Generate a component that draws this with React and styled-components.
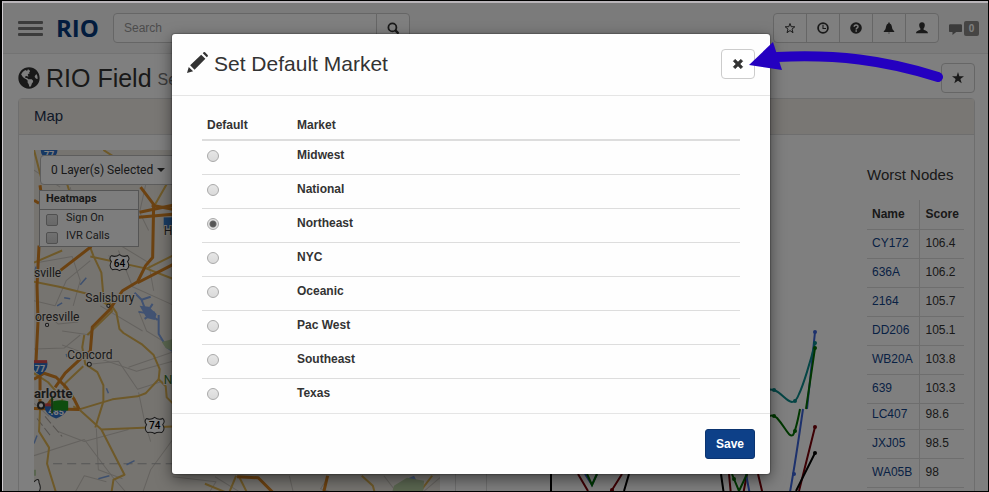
import React, { useState } from 'react';
import styled, { createGlobalStyle } from 'styled-components';
import { FaGlobeAmericas } from 'react-icons/fa';

const GlobalStyle = createGlobalStyle`
  * { box-sizing: border-box; }
  body {
    margin: 0;
    background: #000;
    color: #333;
    font: 12px/17px "Liberation Sans", Arial, sans-serif;
  }
  button, input { font: inherit; color: inherit; }
`;

const Frame = styled.div`
  height: 100vh;
  border: 1px solid #000;
  border-left-width: 2px;
`;

const Screen = styled.div`
  position: relative;
  height: 100%;
  overflow: hidden;
  background: #fff;
  border-top: 2px solid #b9b5b9;
  border-left: 1px solid #d2ced2;
`;

const TopBar = styled.header`
  display: flex;
  align-items: center;
  height: 51px;
  padding: 0 9px 0 15px;
  background: #f7f7f7;
  border-bottom: 1px solid #e7e7e7;
`;

const MenuButton = styled.button`
  display: grid;
  gap: 3px;
  width: 25px;
  padding: 0;
  border: 0;
  background: none;
  span { height: 3px; border-radius: 1px; background: #777; }
`;

const Logo = styled.a`
  margin-left: 13px;
  width: 57px;
  color: #04397c;
  font: bold 24px/30px "Open Sans", "Noto Sans", sans-serif;
  text-decoration: none;
`;

const SearchForm = styled.form`
  display: flex;
  flex: 0 1 297px;
  height: 30px;
`;

const SearchInput = styled.input`
  flex: 1;
  min-width: 0;
  padding: 0 10px;
  border: 1px solid #ccc;
  border-radius: 4px 0 0 4px;
  background: #fff;
  &::placeholder { color: #999; opacity: 1; }
`;

const Button = styled.button`
  display: inline-flex;
  align-items: center;
  justify-content: center;
  width: 34px;
  height: 30px;
  padding: 0;
  border: 1px solid #ccc;
  border-radius: 4px;
  background: #fff;
  color: #333;
`;

const SearchButton = styled(Button)`
  margin-left: -1px;
  border-radius: 0 4px 4px 0;
`;

const ButtonGroup = styled.div`
  display: flex;
  margin-left: auto;
  ${Button} {
    border-radius: 0;
    &:not(:first-child) { margin-left: -1px; }
    &:first-child { border-radius: 4px 0 0 4px; }
    &:last-child { border-radius: 0 4px 4px 0; }
  }
`;

const Messages = styled.a`
  display: flex;
  align-items: center;
  gap: 2px;
  margin-left: 10px;
  color: #777;
  text-decoration: none;
`;

const Badge = styled.span`
  width: 15px;
  height: 15px;
  border-radius: 2px;
  background: #8d8b88;
  color: #fff;
  font-size: 10px;
  font-weight: bold;
  line-height: 15px;
  text-align: center;
`;

const PageHead = styled.div`
  display: flex;
  align-items: flex-start;
  justify-content: space-between;
  padding: 9px 13px 5px 15px;
`;

const PageTitle = styled.h1`
  display: flex;
  align-items: center;
  margin: 0;
  font-size: 25px;
  font-weight: normal;
  line-height: 27px;
  svg { margin-right: 6px; }
  small { margin-left: 6px; padding-top: 3px; color: #777; font-size: 16px; }
`;

const Panels = styled.div`
  display: grid;
  grid-template-columns: 438fr 489fr;
  gap: 30px;
  padding: 0 13px 0 15px;
`;

const Panel = styled.section`
  min-width: 0;
  border: 1px solid #ddd;
  border-radius: 4px 4px 0 0;
`;

const PanelTitle = styled.h2`
  height: 36px;
  margin: 0;
  padding: 0 15px;
  border-bottom: 1px solid #ddd;
  background: #f3eee9;
  color: #1d3350;
  font-size: 15px;
  font-weight: normal;
  line-height: 34px;
`;

const PanelBody = styled.div`
  display: flex;
  padding: ${(p) => (p.$chart ? '15px 10px 0 15px' : '15px')};
  height: 400px;
`;

const MapArea = styled.div`
  position: relative;
  flex: 1;
  min-width: 0;
  overflow: hidden;
  background: #ede8e0;
  font-family: Roboto, sans-serif;
  > svg { display: block; width: 100%; height: 100%; }
`;

const MapControls = styled.div`
  position: absolute;
  top: 5px;
  left: 5px;
`;

const LayerButton = styled.button`
  display: flex;
  align-items: center;
  gap: 4px;
  height: 30px;
  margin: 0 0 5px 1px;
  padding: 0 10px;
  border: 1px solid #bbb;
  border-radius: 4px;
  background: #fff;
`;

const Heatmaps = styled.fieldset`
  width: 100px;
  height: 57px;
  margin: 0;
  padding: 0;
  border: 1px solid #aaa;
  background: #fbfbfb;
  font-size: 11px;
`;

const HeatTitle = styled.div`
  height: 19px;
  padding-left: 6px;
  border-bottom: 1px solid #aaa;
  font-weight: bold;
  line-height: 16px;
`;

const CheckRow = styled.label`
  display: flex;
  gap: 8px;
  height: 18px;
  padding-left: 6px;
  line-height: 16px;
`;

const Tick = styled.input`
  appearance: none;
  width: 12px;
  height: 12px;
  margin: 4px 0 0;
  border: 1px solid #a0a0a0;
  border-radius: 2px;
  background: linear-gradient(#e2e2e2, #cfcfcf);
`;

const ChartArea = styled.div`
  flex: 1;
  min-width: 0;
  svg { display: block; }
`;

const NodesBlock = styled.div`
  width: 97px;
  padding-top: 16px;
`;

const NodesTitle = styled.h3`
  margin: 0 0 16px;
  font-size: 15px;
  font-weight: normal;
  line-height: 18px;
  white-space: nowrap;
`;

const NodesTable = styled.table`
  width: 100%;
  border-collapse: collapse;
  table-layout: fixed;
  th, td {
    height: 29px;
    padding: 0 0 0 6px;
    border-bottom: 1px solid #ddd;
    text-align: left;
  }
  th:first-child, td:first-child { width: 52px; padding-left: 5px; border-right: 1px solid #ddd; }
  a { color: #114389; text-decoration: none; }
`;

const NodeRow = styled.tr`
  && td { ${(p) => p.$short && 'height: 26px; padding-bottom: 4px;'} }
`;

const Backdrop = styled.div`
  position: absolute;
  inset: 0;
  display: flex;
  justify-content: center;
  align-items: flex-start;
  padding: 31px 49px 0 0;
  background: rgba(0, 0, 0, 0.5);
`;

const Dialog = styled.div`
  width: 598px;
  max-width: 90%;
  border-radius: 3px;
  background: #fefefe;
  box-shadow: 0 5px 15px rgba(0, 0, 0, 0.5), 0 0 1px 1px rgba(0, 0, 0, 0.2);
`;

const DialogHead = styled.div`
  display: flex;
  align-items: flex-start;
  justify-content: space-between;
  padding: 15px;
  height: 62px;
  border-bottom: 1px solid #e5e5e5;
`;

const DialogTitle = styled.h2`
  display: flex;
  align-items: center;
  gap: 6px;
  margin: 0;
  font-size: 21px;
  font-weight: normal;
  line-height: 30px;
  svg { margin-bottom: 3px; }
`;

const DialogBody = styled.div`
  padding: 15px 30px 1px;
`;

const MarketTable = styled.table`
  width: 100%;
  border-collapse: separate;
  border-spacing: 0;
  th { padding: 6px 5px 5px; border-bottom: 2px solid #ddd; text-align: left; }
  th:first-child { width: 90px; }
  td { height: 33px; padding: 6px 5px 10px; font-weight: bold; vertical-align: top; }
  tr + tr td { height: 34px; border-top: 1px solid #ddd; }
`;

const Radio = styled.input`
  appearance: none;
  display: block;
  width: 12px;
  height: 12px;
  margin: 3px 0 0;
  border: 1px solid #a9a9a9;
  border-radius: 50%;
  background: linear-gradient(#e6e6e6, #dadada);
  &:checked { background: radial-gradient(circle, #555 0 2px, #666 3px, #e2e2e2 4px); }
`;

const DialogFoot = styled.div`
  display: flex;
  justify-content: flex-end;
  padding: 15px;
  border-top: 1px solid #e5e5e5;
`;

const SaveButton = styled.button`
  width: 50px;
  height: 30px;
  padding: 0;
  border: 1px solid #0b3470;
  border-radius: 3px;
  background: #0d4088;
  color: #fff;
  font-weight: bold;
`;

const Pointer = styled.svg`
  position: absolute;
  top: 39px;
  right: 45px;
  pointer-events: none;
`;

const glyphs = {
  search: <><circle cx="5.4" cy="5.4" r="4" fill="none" stroke="currentColor" strokeWidth="1.8" /><path d="m8.4 8.4 3.2 3.2" stroke="currentColor" strokeWidth="2.4" /></>,
  starOutline: <path d="M6 1.5 7.2 4.7l3.6.1-2.8 2.3 1 3.6L6 8.6l-3 2.1 1-3.6-2.8-2.3 3.6-.1Z" fill="none" stroke="currentColor" />,
  star: <path d="M6 0 7.4 4.2H12L8.4 6.9 9.7 11.3 6 8.7 2.3 11.3 3.6 6.9 0 4.2H4.6Z" fill="currentColor" />,
  clock: <><circle cx="6" cy="6" r="4.9" fill="none" stroke="currentColor" strokeWidth="1.8" /><path d="M6 2.8v3.7h3" fill="none" stroke="currentColor" strokeWidth="1.1" /></>,
  question: <><circle cx="6" cy="6" r="5.8" fill="currentColor" /><path d="M4.2 4.8C4.2 2.5 8 2.5 8 4.7 8 6 6.2 5.9 6.2 7.4M6.2 8.3v1.5" fill="none" stroke="#fff" strokeWidth="1.5" /></>,
  bell: <path d="M5.3.7Q6 0 6.7.7V1.4C9.4 2.2 8.6 6 10 7.8L11.3 9.4V10H.7V9.4L2 7.8C3.4 6 2.6 2.2 5.3 1.4ZM4.8 10.7H7.2Q6 12.3 4.8 10.7" fill="currentColor" />,
  user: <path d="M6 .2c2.1 0 3 1.3 2.8 3.2C8.7 5 8 5.8 7.6 6.4V7.7C9.2 8.6 11.8 8.8 12 11.2H0C.2 8.8 2.8 8.6 4.4 7.7V6.4C4 5.8 3.3 5 3.2 3.4 3 1.5 3.9.2 6 .2Z" fill="currentColor" />,
  comment: <path d="M1.2 2h9.6Q12 2 12 3.1V8.2Q12 9.3 10.8 9.3H6.7L3.2 12V9.3H1.2Q0 9.3 0 8.2V3.1Q0 2 1.2 2Z" fill="currentColor" />,
  close: <path d="M3.2 1.2 6 4 8.8 1.2 10.8 3.2 8 6l2.8 2.8-2 2L6 8l-2.8 2.8-2-2L4 6 1.2 3.2Z" fill="currentColor" stroke="currentColor" strokeWidth=".5" strokeLinejoin="round" />,
  pencil: <path d="M0 12 1 8.5 3.5 11ZM1.8 7.6 8.1 1.5 10.5 3.9 4.3 10.1ZM9 .7 9.5.2Q9.9-.1 10.3.2L11.8 1.7Q12.1 2.1 11.8 2.5L11.3 3Z" fill="currentColor" />,
};

const Icon = ({ name, size = 12 }) => (
  <svg width={size} height={size} viewBox="0 0 12 12" aria-hidden="true">{glyphs[name]}</svg>
);

const nodes = [
  ['CY172', '106.4'], ['636A', '106.2'], ['2164', '105.7'], ['DD206', '105.1'], ['WB20A', '103.8'],
  ['639', '103.3'], ['LC407', '98.6'], ['JXJ05', '98.5'], ['WA05B', '98'],
];

const markets = ['Midwest', 'National', 'Northeast', 'NYC', 'Oceanic', 'Pac West', 'Southeast', 'Texas'];

const actions = [
  ['starOutline', 'Favorites'], ['clock', 'History'], ['question', 'Help'], ['bell', 'Alerts'], ['user', 'Account'],
];

const minorRoads = [
  'M34 170 60 187M70 187 78 220M145 185 139 212 148 230M34 300 55 305 66 280 90 260',
  'M38 262 72 256 80 280 73 305M100 305 142 330M115 225 120 245 148 262 153 290M62 330 90 334',
  'M34 348 64 347 80 334M62 344 92 355 136 370 172 360M138 310 146 330 172 346M128 366 172 351',
  'M89 363 118 360 137 388 162 380M58 430 84 440 128 428M34 454 84 438 112 475 126 491',
  'M96 427 98 468 122 477M74 492 84 474 106 480M138 391 144 420 150 440M172 438 150 468 142 491',
  'M172 475 215 480 208 491M214 475 240 491M288 474 292 491M327 475 319 487 332 491M382 474 395 491M440 474 420 491',
  'M118 250 132 286 172 304M108 255 130 267M48 315 58 323 78 321M34 402 49 415',
];
const yellowRoads = [
  'M34 281 59 286 91 294 109 305M34 150 41 177M67 184 72 200M90 247 93 255 101 272 103 295 112 310M90 256 146 268 172 278M34 262 62 250',
  'M103 150 114 157 120 170M171 155V175L154 205M146 268 172 255',
  'M108 300 116 312 119 328 123 332 141 343 153 354 159 368 158 378',
  'M84 334 82 346 85 363 97 371 103 384 103 400 95 426M83 365 65 382 61 405M112 310 87 334',
  'M158 378 145 392 137 395 112 398 79 408M158 378 165 385 166 396 174 404M34 372 48 381 56 390M73 405 79 408',
  'M79 408 101 428 124 473 113 478 111 491M101 428 172 425',
  'M40 408 39 430 49 446 47 462 51 475 56 491',
  'M204 482 226 491M235 474 228 491M360 474 371 484 373 491M430 474 417 491M238 475 246 491',
];
const majorRoads = [
  'M40 185 42 200M39 245 37 285 38 320 36 360M34 200 39 203M140 187 153 204 152 257 145 265 137 281 122 290 109 309 92 326 90 350 80 358 65 372 55 386',
  'M34 378 44 372 56 376 66 386 74 398 79 408M40 375 40 405M34 407 79 408M56 392 45 407M60 270 91 246M139 212 172 205M138 217 172 214M137 282 172 264',
  'M236 475 257 476 272 491M326 474 322 491M151 205 172 209',
];

const Shield = ({ x, y, label }) => (
  <g>
    <path d={`M${x - 8} ${y - 7}q4 2 8-1q4 3 8 1q3 3 0 6q3 5-1 8q-4-1-7 1q-3-2-7-1q-4-3-1-8q-3-3 0-6`} fill="#fff" stroke="#333" />
    <text x={x} y={y + 4} fontSize="10" fontWeight="500" textAnchor="middle">{label}</text>
  </g>
);

const Interstate = ({ x, y, label, rx = 7 }) => (
  <g>
    <path d={`M${x - rx} ${y - 6}h${rx * 2}q2 9-${rx} 14q-${rx + 2}-5-${rx}-14`} fill="#2c6fc6" />
    <path d={`M${x - rx} ${y - 7}h${rx * 2}v3h-${rx * 2}Z`} fill="#d54a4d" />
    <text x={x} y={y + 5} fontSize="9" fontWeight="bold" fill="#fff" textAnchor="middle">{label}</text>
  </g>
);

function RoadMap() {
  return (
    <svg viewBox="34 150 406 368" preserveAspectRatio="xMinYMin slice" role="img" aria-label="Map">
      <g fill="none" strokeLinejoin="round">
        {minorRoads.map((d) => <path key={d} d={d} stroke="#c9c5be" strokeWidth="1" />)}
        <path d="M53 462H172" stroke="#aaa" strokeDasharray="9 5" />
        <path d="M37 417 51 435M45 415 62 435" stroke="#aaa59f" strokeDasharray="9 3" />
        {yellowRoads.map((d) => <path key={d} d={d} stroke="#dcb252" strokeWidth="2" />)}
        {majorRoads.map((d) => <path key={d} d={d} stroke="#d88423" strokeWidth="3" />)}
        <path d="M36 266 34 275M80 284 86 277M106 387 108 392M67 356 66 353M57 305 62 302M126 463 134 459M34 442 37 434M98 477 109 474M70 298 64 297" stroke="#7da1dc" strokeWidth="1.5" />
        <path d="M134 292 141 299 146 312 138 311M141 299 150 296M146 312 152 303M146 312 157 319M144 318 154 311M158 314V333L166 346 172 350" stroke="#82a5e4" strokeWidth="2" />
      </g>
      <path d="M139 305 148 306 156 313 154 319 146 317ZM405 477 412 474 416 482 408 480Z" fill="#82a5e4" />
      <path d="M161 341 172 338V350L165 347ZM392 484 405 476 422 479 421 491H390ZM34 468 36 468V474H34Z" fill="#b5cda0" />
      <path d="M163 217h9v11h-9Z" fill="#347ac8" />
      <Interstate x={49} y={153} label="77" rx={8} />
      <Interstate x={40} y={366} label="77" />
      <Interstate x={56} y={409} label="485" rx={11} />
      <Shield x={119} y={262} label="64" />
      <Shield x={154} y={424} label="74" />
      <path d="M34 480q5-5 5 1q3 6-1 10h-4" fill="#fff" stroke="#333" />
      <g fill="#333" fontSize="12" stroke="#f4efe7" strokeWidth="2" paintOrder="stroke">
        <text x="34" y="276">sville</text>
        <text x="85" y="301">Salisbury</text>
        <text x="35" y="320">oresville</text>
        <text x="67" y="358">Concord</text>
        <text x="34" y="397" fontSize="13" fontWeight="bold">arlotte</text>
        <text x="163" y="235">High Point</text>
        <text x="163" y="383" fill="#37792c">National</text>
      </g>
      <g fill="#fff" stroke="#333">
        <circle cx="108" cy="305" r="1.6" />
        <circle cx="47" cy="324" r="1.6" />
        <circle cx="89" cy="363" r="2" />
        <circle cx="41" cy="404" r="3" strokeWidth="2" />
      </g>
      <path d="M52 396v16" stroke="#2f6b2a" strokeWidth="2" />
      <path d="M53 400q8-2 15 0v9H53Z" fill="#1c9a1c" />
    </svg>
  );
}

const series = [
  { color: '#7a0008', d: 'M578 474 588 491M622 474 612 490 608 495M729 474 731 495M747 474 743 495M758 474 763 495M799 491 815 427', dots: [[612, 490], [815, 427]] },
  { color: '#3a62d8', d: 'M585 474 592 485 597 474M746 474 750 495M790 492C794 470 800 430 803 409M807 409 815 332', dots: [[794, 474], [815, 332]] },
  { color: '#000', d: 'M551 300V495M629 474 624 491M721 474 724 495M796 491 815 453', dots: [[651, 472], [815, 453]] },
  { color: '#0a8a8a', d: 'M766 389 774 390C782 393 786 401 792 402Q796 402 799 394C803 386 811 360 815 343', dots: [[774, 390], [795, 401], [815, 343]] },
  { color: '#006e00', d: 'M587 474 592 485 597 474M732 474 734 479 739 491 747 474M766 418Q772 413 777 418C786 428 789 438 793 435Q796 430 800 409M806 409 815 348', dots: [[734, 479], [774, 416], [795, 431], [815, 348]] },
];

function TrendChart() {
  return (
    <ChartArea>
      <svg width="350" height="350" viewBox="502 150 350 350" role="img" aria-label="Score trend">
        {series.map((s) => (
          <g key={s.color}>
            <path d={s.d} fill="none" stroke={s.color} strokeWidth="2" />
            {s.dots.map(([x, y]) => <circle key={`${x}-${y}`} cx={x} cy={y} r="2" fill={s.color} />)}
          </g>
        ))}
      </svg>
    </ChartArea>
  );
}

export default function App() {
  const [market, setMarket] = useState('Northeast');
  return (
    <>
      <GlobalStyle />
      <Frame>
        <Screen>
          <TopBar>
            <MenuButton aria-label="Menu"><span /><span /><span /></MenuButton>
            <Logo href="#">RIO</Logo>
            <SearchForm>
              <SearchInput placeholder="Search" aria-label="Search" />
              <SearchButton type="button" aria-label="Run search"><Icon name="search" /></SearchButton>
            </SearchForm>
            <ButtonGroup>
              {actions.map(([name, label]) => <Button key={name} aria-label={label}><Icon name={name} /></Button>)}
            </ButtonGroup>
            <Messages href="#" aria-label="Messages"><Icon name="comment" size={13} /><Badge>0</Badge></Messages>
          </TopBar>
          <PageHead>
            <PageTitle><FaGlobeAmericas size={22} />RIO Field <small>Services</small></PageTitle>
            <Button aria-label="Set default market"><Icon name="star" /></Button>
          </PageHead>
          <Panels>
            <Panel>
              <PanelTitle>Map</PanelTitle>
              <PanelBody>
                <MapArea>
                  <RoadMap />
                  <MapControls>
                    <LayerButton>
                      0 Layer(s) Selected
                      <svg width="8" height="4" viewBox="0 0 8 4" aria-hidden="true"><path d="M0 0h8L4 4Z" fill="#333" /></svg>
                    </LayerButton>
                    <Heatmaps aria-label="Heatmaps">
                      <HeatTitle>Heatmaps</HeatTitle>
                      <CheckRow><Tick type="checkbox" />Sign On</CheckRow>
                      <CheckRow><Tick type="checkbox" />IVR Calls</CheckRow>
                    </Heatmaps>
                  </MapControls>
                </MapArea>
              </PanelBody>
            </Panel>
            <Panel>
              <PanelTitle />
              <PanelBody $chart>
                <TrendChart />
                <NodesBlock>
                  <NodesTitle>Worst Nodes</NodesTitle>
                  <NodesTable>
                    <thead><tr><th>Name</th><th>Score</th></tr></thead>
                    <tbody>
                      {nodes.map(([name, score]) => (
                        <NodeRow key={name} $short={name === 'LC407'}>
                          <td><a href="#">{name}</a></td>
                          <td>{score}</td>
                        </NodeRow>
                      ))}
                    </tbody>
                  </NodesTable>
                </NodesBlock>
              </PanelBody>
            </Panel>
          </Panels>
          <Backdrop>
            <Dialog role="dialog" aria-labelledby="dialog-title">
              <DialogHead>
                <DialogTitle id="dialog-title"><Icon name="pencil" size={21} />Set Default Market</DialogTitle>
                <Button aria-label="Close"><Icon name="close" /></Button>
              </DialogHead>
              <DialogBody>
                <MarketTable>
                  <thead><tr><th>Default</th><th>Market</th></tr></thead>
                  <tbody>
                    {markets.map((m) => (
                      <tr key={m}>
                        <td><Radio type="radio" name="market" id={m} checked={market === m} onChange={() => setMarket(m)} /></td>
                        <td><label htmlFor={m}>{m}</label></td>
                      </tr>
                    ))}
                  </tbody>
                </MarketTable>
              </DialogBody>
              <DialogFoot><SaveButton>Save</SaveButton></DialogFoot>
            </Dialog>
          </Backdrop>
          <Pointer width="194" height="42" viewBox="749 42 194 42" aria-hidden="true">
            <path d="M938 77C885 60 835 54 777 57" fill="none" stroke="#2400c0" strokeWidth="10" strokeLinecap="round" />
            <path d="M749 65 773 42 782 70Z" fill="#2400c0" />
          </Pointer>
        </Screen>
      </Frame>
    </>
  );
}
